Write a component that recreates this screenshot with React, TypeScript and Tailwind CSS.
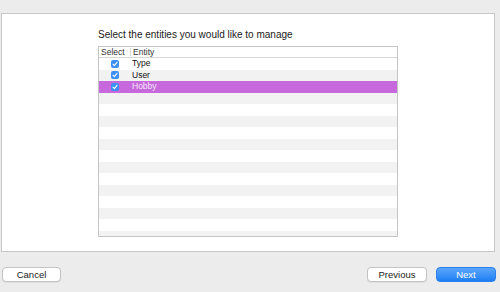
import React from "react";

const Check = () => (
  <span className="flex h-[8px] w-[8px] items-center justify-center rounded-[2px] bg-[#3b8ff5]">
    <svg width="6" height="6" viewBox="0 0 6 6">
      <path d="M1 3.2 L2.4 4.6 L5 1.3" fill="none" stroke="white" strokeWidth="1.1" strokeLinecap="round" strokeLinejoin="round" />
    </svg>
  </span>
);

export default function App() {
  const items = ["Type", "User", "Hobby"];
  const rows = Array.from({ length: 16 }, (_, i) => i);
  return (
    <div className="relative h-[292px] w-[500px] overflow-hidden bg-[#ececec] font-['Liberation_Sans',Arial,sans-serif]">
      <div className="ml-[1px] mt-[13px] h-[239px] w-[494px] border border-[#c6c6c6] bg-white pl-[96px] pt-[15px]">
        <div className="text-[10px] leading-[12px] text-[#1a1a1a]">Select the entities you would like to manage</div>
        <div className="mt-[5px] h-[191px] w-[300px] overflow-hidden border border-[#c4c4c4]">
          <div className="flex h-[11px] items-center border-b border-[#d6d6d6] text-[8.5px] leading-[11px] text-[#333]">
            <div className="w-[31px] pl-[2px]">Select</div>
            <div className="h-[8px] w-px bg-[#d8d8d8]" />
            <div className="pl-[2px]">Entity</div>
          </div>
          {rows.map((i) => {
            const item = items[i];
            const selected = i === 2;
            const bg = selected ? "bg-[#c769dd]" : i % 2 === 1 ? "bg-[#f2f2f2]" : "bg-white";
            return (
              <div key={i} className={`flex h-[11.5px] items-center text-[8.5px] leading-[11px] ${bg}`}>
                <div className="flex w-[31px] justify-center pl-[1px]">{item ? <Check /> : null}</div>
                <div className={`pl-[2px] ${selected ? "text-[#f5e6fa]" : "text-[#111]"}`}>{item ?? ""}</div>
              </div>
            );
          })}
        </div>
      </div>
      <div className="mt-[15px] flex items-center pl-[2px] pr-[4px]">
        <button className="h-[15px] w-[59px] rounded-[4px] border border-[#c3c3c3] bg-white text-[9.5px] leading-[13px] text-[#222] shadow-[0_0.5px_0.5px_rgba(0,0,0,0.1)]">
          Cancel
        </button>
        <div className="flex-1" />
        <button className="h-[15px] w-[60px] rounded-[4px] border border-[#c3c3c3] bg-white text-[9.5px] leading-[13px] text-[#222] shadow-[0_0.5px_0.5px_rgba(0,0,0,0.1)]">
          Previous
        </button>
        <button className="ml-[9px] h-[15px] w-[60px] rounded-[4px] border border-[#2a80ef] bg-gradient-to-b from-[#5aa6fa] to-[#1c7ff4] text-[9.5px] leading-[13px] text-white">
          Next
        </button>
      </div>
    </div>
  );
}
